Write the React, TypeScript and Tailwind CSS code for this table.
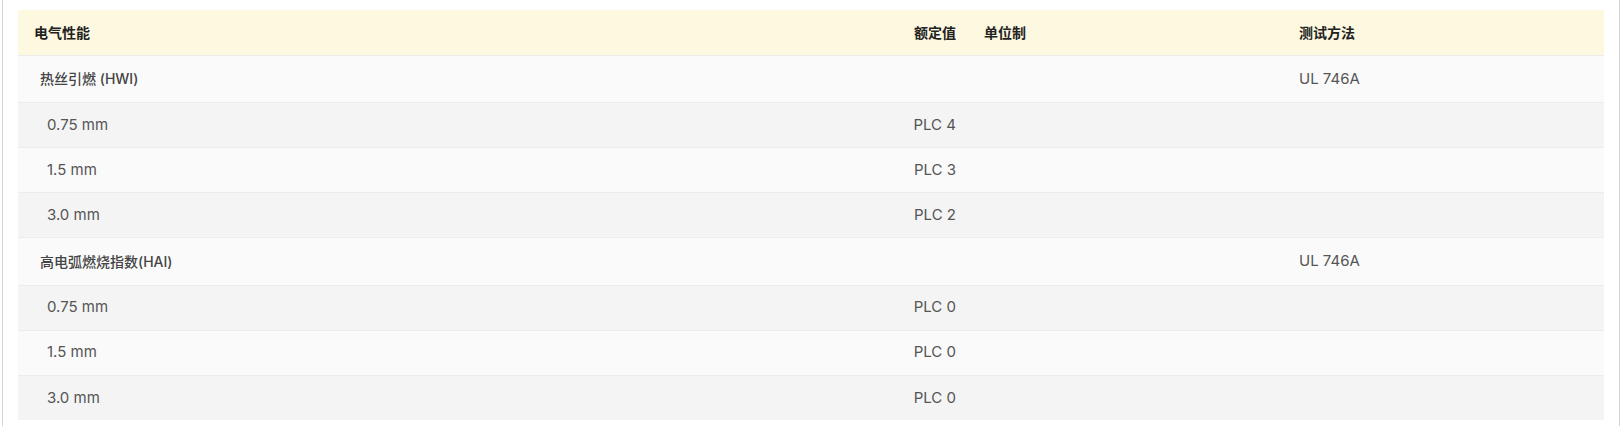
const groups = [
  {
    name: '热丝引燃 (HWI)',
    method: 'UL 746A',
    rows: [
      { label: '0.75 mm', value: 'PLC 4' },
      { label: '1.5 mm', value: 'PLC 3' },
      { label: '3.0 mm', value: 'PLC 2' },
    ],
  },
  {
    name: '高电弧燃烧指数(HAI)',
    method: 'UL 746A',
    rows: [
      { label: '0.75 mm', value: 'PLC 0' },
      { label: '1.5 mm', value: 'PLC 0' },
      { label: '3.0 mm', value: 'PLC 0' },
    ],
  },
];

export default function App() {
  return (
    <div
      className="w-[1623px] h-[426px] bg-white"
      style={{ fontFamily: 'Inter, "Noto Sans CJK SC", sans-serif' }}
    >
      <div className="ml-[2px] mr-[3px] h-full border-x border-[#d4d4d4] px-[15px] pt-[10px]">
        <table className="w-[1586px] table-fixed border-collapse text-[15px] text-[#555]">
          <colgroup>
            <col className="w-[802px]" />
            <col className="w-[150px]" />
            <col className="w-[315px]" />
            <col className="w-[319px]" />
          </colgroup>
          <thead>
            <tr className="h-[45px] bg-[#fdf8e0] text-[14px] text-[#222]">
              <th className="pl-[16px] text-left font-semibold">电气性能</th>
              <th className="pr-[14px] text-right font-semibold">额定值</th>
              <th className="pl-[14px] text-left font-semibold">单位制</th>
              <th className="pl-[14px] text-left font-semibold">测试方法</th>
            </tr>
          </thead>
          <tbody>
            {groups.map((g) => (
              <>
                <tr key={g.name} className="h-[47.5px] border-t border-[#ececec] bg-[#fafafa]">
                  <td className="pl-[22px] text-[14px] font-medium text-[#444]">{g.name}</td>
                  <td />
                  <td />
                  <td className="pl-[14px]">{g.method}</td>
                </tr>
                {g.rows.map((r, i) => (
                  <tr
                    key={g.name + r.label}
                    className={`h-[45px] border-t border-[#ececec] ${i % 2 === 0 ? 'bg-[#f4f4f4]' : 'bg-[#fafafa]'}`}
                  >
                    <td className="pl-[29px]">{r.label}</td>
                    <td className="pr-[14px] text-right">{r.value}</td>
                    <td />
                    <td />
                  </tr>
                ))}
              </>
            ))}
          </tbody>
        </table>
      </div>
    </div>
  );
}
